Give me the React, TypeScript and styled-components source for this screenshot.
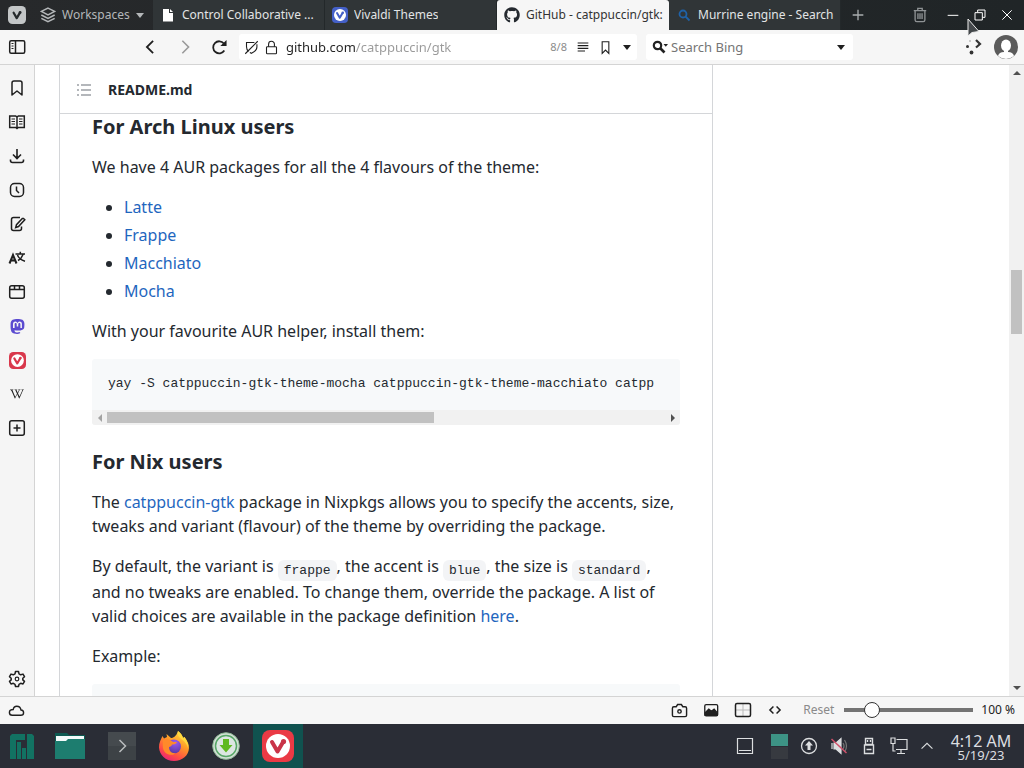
import React from "react";
import styled, { createGlobalStyle, css } from "styled-components";
import { FaGithub, FaMastodon, FaWikipediaW } from "react-icons/fa";

const ui = `"Noto Sans", sans-serif`;
const mono = `"Liberation Mono", monospace`;

const GlobalStyle = createGlobalStyle`
  *, *::before, *::after { box-sizing: border-box; }
  body { margin: 0; font-family: ${ui}; overflow: hidden; }
  button { font: inherit; color: inherit; background: none; border: 0; padding: 0; margin: 0; }
  svg { display: block; flex: none; }
`;

const Desktop = styled.div`
  display: flex;
  flex-direction: column;
  height: 100vh;
  background: #fff;
  color: #24292f;
`;

const IconButton = styled.button<{ $w?: number; $tone?: string }>`
  display: flex;
  align-items: center;
  justify-content: center;
  flex: none;
  width: ${(p) => p.$w ?? 34}px;
  align-self: stretch;
  color: ${(p) => p.$tone ?? "#1f1f1f"};
`;

/* ---------- title bar ---------- */

const TitleBar = styled.header`
  display: flex;
  flex: none;
  height: 30px;
  background: linear-gradient(90deg, #27292b, #202527);
  color: #e2e4e5;
  font-size: 12px;
  line-height: 20px;
`;

const WorkspaceArea = styled.div`
  display: flex;
  flex: none;
  width: 153px;
`;

const WorkspaceButton = styled.button`
  display: flex;
  align-items: center;
  gap: 6px;
  padding-left: 7px;
  color: #b4b7b9;
`;

const Tabs = styled.div`
  display: flex;
  flex: 0 1 688px;
  min-width: 0;
`;

const Tab = styled.button<{ $active?: boolean }>`
  display: flex;
  align-items: center;
  gap: 6px;
  flex: 1 1 0;
  min-width: 0;
  padding: 0 4px 0 7px;
  text-align: left;
  background: ${(p) => (p.$active ? "#f6f6f6" : "#303537")};
  color: ${(p) => (p.$active ? "#333" : "#e2e4e5")};
  border-radius: ${(p) => (p.$active ? "3px 3px 0 0" : "0")};
  box-shadow: ${(p) => (p.$active ? "none" : "inset -1px 0 #23282a")};
`;

const TabTitle = styled.span`
  overflow: hidden;
  white-space: nowrap;
`;

const WindowControls = styled.div`
  display: flex;
  margin-left: auto;
  padding-right: 4px;
`;

const TrashSlot = styled.div`
  display: flex;
  margin-right: 5px;
`;

const RestoreSlot = styled.div`
  display: flex;
  position: relative;
`;

const Pointer = styled.svg`
  position: absolute;
  left: 0;
  top: 18px;
  z-index: 2;
`;

/* ---------- address bar ---------- */

const AddressBar = styled.div`
  display: flex;
  align-items: center;
  flex: none;
  height: 35px;
  background: #f6f6f6;
  border-bottom: 1px solid #d4d4d4;
`;

const NavGroup = styled.div`
  display: flex;
  align-self: stretch;
  flex: none;
  margin-left: 99px;
  width: 106px;
`;

const Field = styled.form<{ $kind: "url" | "search" }>`
  display: flex;
  align-items: center;
  height: 26px;
  background: #fff;
  border-radius: 3px;
  ${(p) =>
    p.$kind === "url"
      ? css`
          flex: 1 1 0;
          min-width: 0;
          padding-left: 2px;
        `
      : css`
          flex: 0 1 207px;
          min-width: 0;
          margin: 0 105px 0 9px;
          padding-left: 2px;
        `}
`;

const TextInput = styled.input`
  flex: 1 1 0;
  min-width: 0;
  height: 24px;
  padding: 0;
  border: 0;
  outline: 0;
  background: transparent;
  font: 13px/20px ${ui};
  color: #222;
  &::placeholder {
    color: #757575;
    opacity: 1;
  }
`;

const UrlInput = styled(TextInput)`
  margin-left: 5px;
  background: linear-gradient(90deg, #222 69px, #999 69px);
  background-clip: text;
  -webkit-background-clip: text;
  color: transparent;
`;

const ImageCount = styled.span`
  margin-right: 6px;
  font-size: 11px;
  line-height: 20px;
  color: #8c8c8c;
`;

const Extensions = styled.div`
  display: flex;
  align-self: stretch;
  flex: none;
`;

/* ---------- main area ---------- */

const Main = styled.div`
  display: flex;
  flex: 1 1 0;
  min-height: 0;
`;

const SidePanel = styled.nav`
  display: flex;
  flex-direction: column;
  flex: none;
  width: 35px;
  padding-top: 6px;
  background: #f5f5f5;
  border-right: 1px solid #d4d4d4;
`;

const PanelButton = styled.button<{ $last?: boolean }>`
  display: flex;
  align-items: center;
  justify-content: center;
  height: 34px;
  color: #1f1f1f;
  margin-top: ${(p) => (p.$last ? "auto" : 0)};
`;

const PageArea = styled.main`
  display: grid;
  grid-template-columns: minmax(0, 1fr) 296px;
  flex: 1 1 0;
  min-width: 0;
  padding-left: 24px;
  overflow: hidden;
`;

const Readme = styled.article`
  border: solid #d4d6d9;
  border-width: 0 1px;
  font-size: 16px;
  line-height: 24px;
`;

const ReadmeHeader = styled.div`
  display: flex;
  align-items: center;
  gap: 16px;
  height: 49px;
  padding: 2px 0 0 16px;
  border-bottom: 1px solid #d4d6d9;
  font-size: 14px;
  font-weight: 700;
`;

const Markdown = styled.div`
  padding: 0 32px;
  h3 {
    margin: 24px 0 16px;
    font-size: 20px;
    line-height: 25px;
    font-weight: 700;
  }
  h3:first-child {
    margin-top: 0;
  }
  p {
    margin: 0 0 16px;
  }
  ul {
    margin: 0 0 16px;
    padding-left: 32px;
  }
  li + li {
    margin-top: 4px;
  }
`;

const Link = styled.a`
  color: #1f66be;
  text-decoration: none;
`;

const InlineCode = styled.code`
  padding: 3px 6px;
  border-radius: 6px;
  background: #f3f4f6;
  font-family: ${mono};
  font-size: 13px;
  line-height: 18px;
  vertical-align: -2px;
`;

const CodeBlock = styled.div`
  margin-bottom: 16px;
  background: #f7f9fa;
  border-radius: 3px;
  overflow: hidden;
`;

const Pre = styled.pre`
  margin: 0;
  padding: 15px 0 16px 16px;
  height: 51px;
  overflow: hidden;
  font: 13px/20px ${mono};
`;

const ScrollTrack = styled.div<{ $vertical?: boolean }>`
  display: flex;
  flex: none;
  background: #f1f1f1;
  flex-direction: ${(p) => (p.$vertical ? "column" : "row")};
  ${(p) => (p.$vertical ? "width: 15px; padding: 0 2px;" : "height: 15px; padding: 2px 0;")}
`;

const ScrollSpace = styled.div<{ $grow: number }>`
  flex: ${(p) => p.$grow} 1 0;
`;

const ScrollThumb = styled(ScrollSpace)`
  background: #c1c1c1;
`;

const ScrollArrow = styled.button<{ $tone: string; $vertical?: boolean }>`
  display: flex;
  align-items: center;
  justify-content: center;
  flex: 0 0 ${(p) => (p.$vertical ? 16 : 15)}px;
  color: ${(p) => p.$tone};
`;

/* ---------- status bar ---------- */

const StatusBar = styled.footer`
  display: flex;
  align-items: center;
  flex: none;
  height: 28px;
  padding-right: 9px;
  background: #f6f6f6;
  box-shadow: inset 0 1px #d4d4d4;
  font-size: 12px;
  line-height: 18px;
  color: #222;
`;

const StatusTools = styled.div`
  display: flex;
  align-self: stretch;
  margin-left: auto;
`;

const ResetButton = styled.button`
  margin: 0 10px 0 12px;
  color: #8a8a8a;
`;

const Zoom = styled.input`
  appearance: none;
  width: 129px;
  height: 18px;
  margin: 0 8px 0 0;
  background: linear-gradient(#747474, #747474) center / 100% 4px no-repeat;
  &::-webkit-slider-thumb {
    appearance: none;
    width: 16px;
    height: 16px;
    border: 1px solid #333;
    border-radius: 50%;
    background: #fff;
  }
`;

/* ---------- desktop panel ---------- */

const Taskbar = styled.footer`
  display: flex;
  flex: none;
  gap: 2px;
  height: 44px;
  background: #2a2d36;
  color: #dcdee0;
`;

const Launcher = styled.button<{ $first?: boolean; $active?: boolean }>`
  display: flex;
  align-items: center;
  justify-content: center;
  width: ${(p) => (p.$first ? 43 : 50)}px;
  background: ${(p) => (p.$active ? "#10524f" : "transparent")};
`;

const Tray = styled.div`
  display: flex;
  margin-left: auto;
`;

const Clock = styled.time`
  display: flex;
  flex-direction: column;
  align-items: center;
  justify-content: center;
  width: 84px;
  padding: 2px 2px 0 0;
  font-size: 16px;
  line-height: 16px;
  white-space: nowrap;
`;

const DateText = styled.span`
  font-size: 13px;
  line-height: 13px;
`;

const Pager = styled.button`
  display: flex;
  flex-direction: column;
  align-self: center;
  width: 17px;
  margin: 0 6px 0 9px;
  gap: 1px;
`;

const PagerCell = styled.span<{ $on?: boolean }>`
  height: 12px;
  background: ${(p) => (p.$on ? "#3d9385" : "#373a40")};
`;

/* ---------- drawings ---------- */

type IconProps = { size?: number; sw?: number; children: React.ReactNode };
const Line = ({ size = 18, sw = 1.5, children }: IconProps) => (
  <svg width={size} height={size} viewBox="0 0 18 18" fill="none" stroke="currentColor" strokeWidth={sw} aria-hidden="true">
    {children}
  </svg>
);

const Caret = ({ w = 9 }: { w?: number }) => (
  <svg width={w} height="5" viewBox="0 0 10 6" aria-hidden="true">
    <path d="M0 0h10L5 6z" fill="currentColor" />
  </svg>
);

const Triangle = ({ d }: { d: string }) => (
  <svg width="8" height="8" viewBox="0 0 8 8" aria-hidden="true">
    <path d={d} fill="currentColor" />
  </svg>
);

const VivaldiMark = ({ size, bg, disc, v }: { size: number; bg: string; disc: string; v: string }) => (
  <svg width={size} height={size} viewBox="0 0 32 32" aria-hidden="true">
    <rect width="32" height="32" rx="8" fill={bg} />
    <circle cx="16" cy="16" r="12" fill={disc} />
    <path d="M10 12l5.500 9.500L20.500 13" fill="none" stroke={v} strokeWidth="4" strokeLinecap="round" strokeLinejoin="round" />
    <circle cx="21.500" cy="11.500" r="2.600" fill={v} />
  </svg>
);

const panels: { label: string; icon: React.ReactNode }[] = [
  { label: "Bookmarks", icon: <Line><path d="M4 4q0-2 2-2h6q2 0 2 2v12l-5-4-5 4z" strokeLinejoin="round" /></Line> },
  {
    label: "Reading list",
    icon: (
      <Line>
        <path d="M1.700 3h6l1.300 1 1.300-1h6v11.500h-6L9 15.500l-1.300-1h-6zM9 4v11" />
        <path d="M3.500 6h3.500M3.500 8.500h3.500M3.500 11h3.500M11 6h3.500M11 8.500h3.500M11 11h3.500" strokeWidth="1" />
      </Line>
    ),
  },
  { label: "Downloads", icon: <Line sw={1.6}><path d="M9 2v9M5 7.500l4 4 4-4M2.500 12.500v1q0 2 2 2h9q2 0 2-2v-1" /></Line> },
  { label: "History", icon: <Line><rect x="2.500" y="2.500" width="13" height="13" rx="4" /><path d="M8.500 5.500v4l2.500 2.500" /></Line> },
  {
    label: "Notes",
    icon: (
      <Line>
        <path d="M12 2.500H5.500q-2 0-2 2v9q0 2 2 2h6q2 0 2-2v-2" />
        <path d="M15.500 3.500l1.300 1.300-6.300 6.700-2.800 1 .8-2.800 5.800-6.200z" />
      </Line>
    ),
  },
  {
    label: "Translate",
    icon: (
      <Line>
        <path d="M1.500 14.500L5 6l3.500 8.500M2.800 11.500h4.500" strokeWidth="2" />
        <path d="M7.500 5h9.500M12.300 2.800v2M15 5.500c-1 3-3 5-5 6M9.500 6c1 3 4 5.200 7.500 6.200" />
      </Line>
    ),
  },
  { label: "Window", icon: <Line><rect x="1.700" y="2.700" width="14.600" height="12.600" rx="2" /><path d="M2 6.500h14M6.500 3v3.500M11.500 3v3.500" /></Line> },
  { label: "Mastodon", icon: <FaMastodon size={17} color="#5b4bd0" /> },
  { label: "Vivaldi", icon: <VivaldiMark size={17} bg="#d9384c" disc="#fff" v="#d9384c" /> },
  { label: "Wikipedia", icon: <FaWikipediaW size={14} /> },
  { label: "Add panel", icon: <Line><rect x="1.700" y="1.700" width="14.600" height="14.600" rx="2" /><path d="M9 5.500v7M5.500 9h7" /></Line> },
];

const FirefoxLogo = () => (
  <svg width="32" height="32" viewBox="0 0 32 32" aria-hidden="true">
    <defs>
      <linearGradient id="fx" x1="0.8" y1="0" x2="0.25" y2="1">
        <stop offset="0" stopColor="#ffe34b" />
        <stop offset="0.4" stopColor="#ff9a26" />
        <stop offset="0.75" stopColor="#ff4c46" />
        <stop offset="1" stopColor="#e8217b" />
      </linearGradient>
      <radialGradient id="fxGlobe" cx="0.6" cy="0.2" r="0.9">
        <stop offset="0" stopColor="#9a5cf0" />
        <stop offset="1" stopColor="#54349b" />
      </radialGradient>
    </defs>
    <path d="M20 1c3 2 4.500 5 5 7l1.500-1c3 4 4.700 7.500 4.500 11-.4 7.500-6.500 13-15 13S1.500 25 1 17.500C.8 13 3 9 4.500 6l1.500 2.500L9 7l-.5-3 4.500 4c2 0 5-1 7-7z" fill="url(#fx)" />
    <circle cx="16" cy="16.500" r="7" fill="url(#fxGlobe)" />
    <path d="M5 10c4-2 8 0 10 2h4c-1 2-3 2.500-5 2.500 0 1.500-2 2.500-3 2.500 0 4 3 7 7 6-5 4-12 1-13-5-.4-3 0-6 0-8z" fill="#ff8a2a" />
    <path d="M20 1c3 2 4.500 5 5 7l1.500-1c3 4 4 8 3.500 11-1-4-3-6-6-8.500S19 6 20 1z" fill="#ffd93e" />
  </svg>
);

const App = () => (
  <>
    <GlobalStyle />
    <Desktop>
      <TitleBar>
        <WorkspaceArea>
          <IconButton $w={33} aria-label="Vivaldi menu">
            <VivaldiMark size={18} bg="#c3c6c7" disc="#c3c6c7" v="#25292b" />
          </IconButton>
          <WorkspaceButton>
            <Line size={16} sw={1.700}>
              <path d="M9 1.200l7.500 3.800L9 8.800 1.500 5zM1.500 9L9 12.800 16.500 9M1.500 12.800L9 16.600l7.500-3.800" />
            </Line>
            Workspaces
            <Caret w={8} />
          </WorkspaceButton>
        </WorkspaceArea>
        <Tabs role="tablist">
          <Tab role="tab">
            <svg width="16" height="16" viewBox="0 0 16 16" aria-hidden="true">
              <path d="M3 2h6v4h4v8.500H3z" fill="#fff" />
              <path d="M10 2l3 3h-3z" fill="#fff" />
            </svg>
            <TabTitle>Control Collaborative ...</TabTitle>
          </Tab>
          <Tab role="tab">
            <VivaldiMark size={16} bg="#4460c8" disc="#fff" v="#4460c8" />
            <TabTitle>Vivaldi Themes</TabTitle>
          </Tab>
          <Tab role="tab" $active aria-selected="true">
            <FaGithub size={16} color="#24292f" />
            <TabTitle>GitHub - catppuccin/gtk:</TabTitle>
          </Tab>
          <Tab role="tab">
            <svg width="16" height="16" viewBox="0 0 16 16" fill="none" stroke="#1f62a8" strokeWidth="1.800" aria-hidden="true">
              <circle cx="7" cy="7" r="3.500" />
              <path d="M9.500 9.500l4 4" />
            </svg>
            <TabTitle>Murrine engine - Search</TabTitle>
          </Tab>
        </Tabs>
        <IconButton aria-label="New tab" $tone="#a9adaf">
          <Line size={16}><path d="M9 3v12M3 9h12" /></Line>
        </IconButton>
        <WindowControls>
          <TrashSlot>
            <IconButton $w={28} aria-label="Closed tabs" $tone="#8f9395">
              <Line size={16}>
                <path d="M2 4h14M6.500 3.500v-2h5v2M3.500 4.500v10q0 2 2 2h7q2 0 2-2v-10M6.700 7v6.500M9 7v6.500M11.300 7v6.500" />
              </Line>
            </IconButton>
          </TrashSlot>
          <IconButton $w={27} aria-label="Minimize" $tone="#fff">
            <Line size={12}><path d="M1 9.500h16" /></Line>
          </IconButton>
          <RestoreSlot>
            <IconButton $w={27} aria-label="Restore" $tone="#fff">
              <Line size={12}><path d="M1.500 5.500h11v11h-11zM5.500 5V1.500h11v11H13" /></Line>
            </IconButton>
            <Pointer width="16" height="24" viewBox="0 0 16 24" aria-hidden="true">
              <path d="M2 1v17l4-3.500 7-1z" fill="#44484b" stroke="#eee" strokeWidth="1" />
            </Pointer>
          </RestoreSlot>
          <IconButton $w={27} aria-label="Close" $tone="#fff">
            <Line size={12}><path d="M2 2l14 14M16 2L2 16" /></Line>
          </IconButton>
        </WindowControls>
      </TitleBar>

      <AddressBar>
        <IconButton aria-label="Toggle panel">
          <Line>
            <rect x="1.700" y="2.700" width="15" height="12.600" rx="1.500" />
            <path d="M7.500 3v12" />
            <path d="M3.500 5.500h2M3.500 8h2M3.500 10.500h2" strokeWidth="1" />
          </Line>
        </IconButton>
        <NavGroup>
          <IconButton aria-label="Back">
            <Line size={16} sw={2}><path d="M12.500 2L5.500 9l7 7" /></Line>
          </IconButton>
          <IconButton $w={36} aria-label="Forward" $tone="#9a9a9a">
            <Line size={16} sw={1.800}><path d="M6 2l7 7-7 7" /></Line>
          </IconButton>
          <IconButton $w={32} aria-label="Reload">
            <Line size={16} sw={2}>
              <path d="M15 13A6.800 6.800 0 1 1 14.500 5" />
              <path d="M17.500 1v7H10.500z" fill="currentColor" stroke="none" />
            </Line>
          </IconButton>
        </NavGroup>
        <Field $kind="url">
          <IconButton type="button" $w={20} aria-label="Tracker blocking">
            <Line size={15} sw={1.300}><path d="M12.500 3H3v5q0 3.500 2.500 6M15.500 5v3.500q0 4.500-6.500 7.500l-2-1M1.500 16.500L16.500 1.500" /></Line>
          </IconButton>
          <IconButton type="button" $w={20} aria-label="Site information">
            <Line size={15} sw={1.300}><rect x="3" y="8" width="12" height="8.500" rx="1" /><path d="M5.500 8V5a3.500 3.500 0 0 1 7 0v3" /></Line>
          </IconButton>
          <UrlInput aria-label="Address" defaultValue="github.com/catppuccin/gtk" />
          <ImageCount>8/8</ImageCount>
          <IconButton type="button" $w={20} aria-label="Reader view">
            <Line size={12} sw={1.800}><path d="M1 3h16M1 7h16M1 11h16M1 15h11" /></Line>
          </IconButton>
          <IconButton type="button" $w={24} aria-label="Bookmark page">
            <Line size={15} sw={1.300}><path d="M5 2h8v14l-4-4-4 4z" /></Line>
          </IconButton>
          <IconButton type="button" $w={20} aria-label="Address history"><Caret w={8} /></IconButton>
        </Field>
        <Field $kind="search">
          <IconButton type="button" $w={23} aria-label="Choose search engine">
            <svg width="16" height="16" viewBox="0 0 16 16" aria-hidden="true">
              <circle cx="5.500" cy="6.500" r="3.700" fill="none" stroke="#222" strokeWidth="2.200" />
              <path d="M8 9l4.500 4.500" stroke="#222" strokeWidth="2.600" />
              <path d="M11.500 5h4.500l-2.200 2.700z" fill="#222" />
            </svg>
          </IconButton>
          <TextInput aria-label="Search" placeholder="Search Bing" />
          <IconButton type="button" $w={24} aria-label="Search history"><Caret w={8} /></IconButton>
        </Field>
        <Extensions>
          <IconButton $w={30} aria-label="Extensions" $tone="#333">
            <svg width="18" height="20" viewBox="0 0 18 20" aria-hidden="true">
              <path d="M12 3l4 4-4 3.500" fill="none" stroke="currentColor" strokeWidth="2.200" />
              <circle cx="3.500" cy="9.500" r="1.500" fill="currentColor" />
              <circle cx="7.500" cy="15.500" r="1.900" fill="currentColor" />
              <circle cx="6" cy="4" r="1" fill="#bbb" />
            </svg>
          </IconButton>
          <IconButton $w={36} aria-label="Profile">
            <svg width="24" height="24" viewBox="0 0 24 24" aria-hidden="true">
              <circle cx="12" cy="12" r="12" fill="#5b5b5b" />
              <ellipse cx="12" cy="10.500" rx="5" ry="6" fill="#fff" />
              <path d="M4 21q1-4 6-4v-3h4v3q5 0 6 4-8 6-16 0z" fill="#fff" />
            </svg>
          </IconButton>
        </Extensions>
      </AddressBar>

      <Main>
        <SidePanel aria-label="Panels">
          {panels.map((p) => (
            <PanelButton key={p.label} aria-label={p.label}>{p.icon}</PanelButton>
          ))}
          <PanelButton $last aria-label="Settings">
            <Line>
              <path
                d="M7.500 1.500h3l.5 2.300 1.700 1 2.300-.7 1.500 2.600L14.800 8.300v1.600l1.700 1.500-1.500 2.600-2.300-.7-1.700 1-.5 2.200h-3L7 14.300l-1.700-1-2.300.7-1.500-2.600 1.700-1.500V8.300L1.500 6.700 3 4.100l2.300.7 1.700-1z"
                strokeLinejoin="round"
              />
              <circle cx="9" cy="9" r="1.800" strokeWidth="1.200" />
            </Line>
          </PanelButton>
        </SidePanel>

        <PageArea>
          <Readme>
            <ReadmeHeader>
              <svg width="16" height="16" viewBox="0 0 16 16" fill="none" stroke="#6a7178" strokeWidth="1.200" aria-hidden="true">
                <path d="M5 3h10M5 8h10M5 13h10M1 3h2M1 8h2M1 13h2" />
              </svg>
              README.md
            </ReadmeHeader>
            <Markdown>
              <h3>For Arch Linux users</h3>
              <p>We have 4 AUR packages for all the 4 flavours of the theme:</p>
              <ul>
                {["Latte", "Frappe", "Macchiato", "Mocha"].map((name) => (
                  <li key={name}><Link href="#">{name}</Link></li>
                ))}
              </ul>
              <p>With your favourite AUR helper, install them:</p>
              <CodeBlock>
                <Pre>yay -S catppuccin-gtk-theme-mocha catppuccin-gtk-theme-macchiato catpp</Pre>
                <ScrollTrack>
                  <ScrollArrow $tone="#a3a3a3" aria-label="Scroll left"><Triangle d="M6 0v8L2 4z" /></ScrollArrow>
                  <ScrollThumb $grow={327} />
                  <ScrollSpace $grow={231} />
                  <ScrollArrow $tone="#505050" aria-label="Scroll right"><Triangle d="M2 0v8l4-4z" /></ScrollArrow>
                </ScrollTrack>
              </CodeBlock>
              <h3>For Nix users</h3>
              <p>
                The <Link href="#">catppuccin-gtk</Link> package in Nixpkgs allows you to specify the accents, size,
                tweaks and variant (flavour) of the theme by overriding the package.
              </p>
              <p>
                By default, the variant is <InlineCode>frappe</InlineCode>, the accent is <InlineCode>blue</InlineCode>,
                the size is <InlineCode>standard</InlineCode>, and no tweaks are enabled. To change them, override the
                package. A list of valid choices are available in the package definition <Link href="#">here</Link>.
              </p>
              <p>Example:</p>
              <CodeBlock><Pre /></CodeBlock>
            </Markdown>
          </Readme>
        </PageArea>

        <ScrollTrack $vertical>
          <ScrollArrow $vertical $tone="#505050" aria-label="Scroll up"><Triangle d="M0 6h8L4 2z" /></ScrollArrow>
          <ScrollSpace $grow={189} />
          <ScrollThumb $grow={64} />
          <ScrollSpace $grow={346} />
          <ScrollArrow $vertical $tone="#505050" aria-label="Scroll down"><Triangle d="M0 2h8L4 6z" /></ScrollArrow>
        </ScrollTrack>
      </Main>

      <StatusBar>
        <IconButton $w={33} aria-label="Sync">
          <Line size={17}>
            <path d="M4.500 14h9q3 0 3-2.700 0-2.500-2.700-2.800Q13 4.500 9.300 4.500 6 4.500 5.500 8 1.500 8 1.500 11q0 3 3 3z" />
          </Line>
        </IconButton>
        <StatusTools>
          <IconButton $w={32} aria-label="Capture page">
            <Line size={17}><path d="M3 5h2.500L7 2.700h4L12.500 5H15q1.500 0 1.500 1.500V14q0 1.500-1.500 1.500H3Q1.500 15.500 1.500 14V6.500Q1.500 5 3 5z" /><circle cx="9" cy="10" r="1.800" /></Line>
          </IconButton>
          <IconButton $w={32} aria-label="Images">
            <Line size={16}><rect x="2" y="3" width="14.500" height="12.500" rx="1.500" /><path d="M2.500 12l4-4 3 2.500L12.500 8l3.500 4v3H2.500z" fill="currentColor" /></Line>
          </IconButton>
          <IconButton $w={32} aria-label="Tiling">
            <Line><path d="M9 3v12M2 9h14" stroke="#bbb" strokeWidth="1" /><rect x="1.500" y="2.500" width="15" height="13" rx="1.500" /></Line>
          </IconButton>
          <IconButton $w={32} aria-label="Page actions">
            <Line size={14} sw={2}><path d="M7 4.500L2.500 9 7 13.500M11 4.500L15.500 9 11 13.500" /></Line>
          </IconButton>
        </StatusTools>
        <ResetButton>Reset</ResetButton>
        <Zoom type="range" min={0} max={100} defaultValue={17} aria-label="Page zoom" />
        <span>100 %</span>
      </StatusBar>

      <Taskbar>
        <Launcher $first aria-label="Application menu">
          <svg width="24" height="25" viewBox="0 0 24 25" fill="#127262" aria-hidden="true">
            <path d="M2 0h13v6H6v19H0V2zM7 8h4v17H7zM12 14h4v11h-4zM16 0h6l2 2v23h-7V0z" />
          </svg>
        </Launcher>
        <Launcher aria-label="Files">
          <svg width="32" height="28" viewBox="0 0 32 28" aria-hidden="true">
            <path d="M1 1h12l2 2h16v10H1z" fill="#0d5a52" />
            <path d="M2 4h28v7H2z" fill="#f3fafa" />
            <path d="M1 9h11l2-2h17v20H1z" fill="#1d7d6f" />
          </svg>
        </Launcher>
        <Launcher aria-label="Terminal">
          <svg width="28" height="28" viewBox="0 0 28 28" aria-hidden="true">
            <path d="M0 0h28v28H0z" fill="#454a4e" />
            <path d="M0 14h28v14H0z" fill="#3d4246" />
            <path d="M11.500 8l6 6-6 6" fill="none" stroke="#b9bcbe" strokeWidth="1.500" />
          </svg>
        </Launcher>
        <Launcher aria-label="Firefox"><FirefoxLogo /></Launcher>
        <Launcher aria-label="Downloader">
          <svg width="28" height="28" viewBox="0 0 28 28" aria-hidden="true">
            <circle cx="14" cy="14" r="13.300" fill="#d5e0d8" stroke="#8fb996" strokeWidth="1" />
            <circle cx="14" cy="14" r="10.500" fill="#dce6e2" stroke="#57a767" strokeWidth="1.500" />
            <path d="M11 7h6v6h3.500L14 20.500 7.500 13H11z" fill="#5fb91f" />
          </svg>
        </Launcher>
        <Launcher $active aria-label="Vivaldi">
          <VivaldiMark size={32} bg="#ea3a45" disc="#fff" v="#c93448" />
        </Launcher>
        <Tray>
          <IconButton $w={34} aria-label="Show desktop" $tone="#dcdee0">
            <Line><path d="M1.500 1.500h15v15h-15zM3 13.500h12" strokeWidth="1.200" /></Line>
          </IconButton>
          <Pager aria-label="Desktops"><PagerCell $on /><PagerCell /></Pager>
          <IconButton $w={30} aria-label="Updates" $tone="#dcdee0">
            <Line sw={1.300}><circle cx="9" cy="9" r="7.500" /><path d="M9 4l4 4.500h-2.500V13h-3V8.500H5z" fill="currentColor" stroke="none" /></Line>
          </IconButton>
          <IconButton $w={30} aria-label="Volume muted" $tone="#dcdee0">
            <Line sw={1.200}>
              <path d="M2 6v6M4 6h2l5-4.500v15L6 12H4z" fill="currentColor" />
              <path d="M13 6q2 3 0 6M14.500 3q4 6 0 12" stroke="#777" />
              <path d="M1.500 2l15 14" stroke="#d0506a" strokeWidth="1.500" />
            </Line>
          </IconButton>
          <IconButton $w={30} aria-label="Removable devices" $tone="#dcdee0">
            <Line sw={1.400}><path d="M5.500 1.500h7v6h-7zM4.500 8h9v8.500h-9z" /><path d="M7.500 3v2M10.500 3v2M6.500 12.500h5" /></Line>
          </IconButton>
          <IconButton $w={30} aria-label="Network" $tone="#dcdee0">
            <Line sw={1.200}><path d="M6.500 2.500h10.500v10H6M1 1h4v5.500H1zM3 6.500V14h2.500M11 12.500v3.500M7 16.500h8" /></Line>
          </IconButton>
          <IconButton $w={26} aria-label="Show hidden icons" $tone="#dcdee0">
            <Line size={14} sw={1.400}><path d="M2 12.500l7-7 7 7" /></Line>
          </IconButton>
          <Clock>4:12 AM<DateText>5/19/23</DateText></Clock>
        </Tray>
      </Taskbar>
    </Desktop>
  </>
);

export default App;
